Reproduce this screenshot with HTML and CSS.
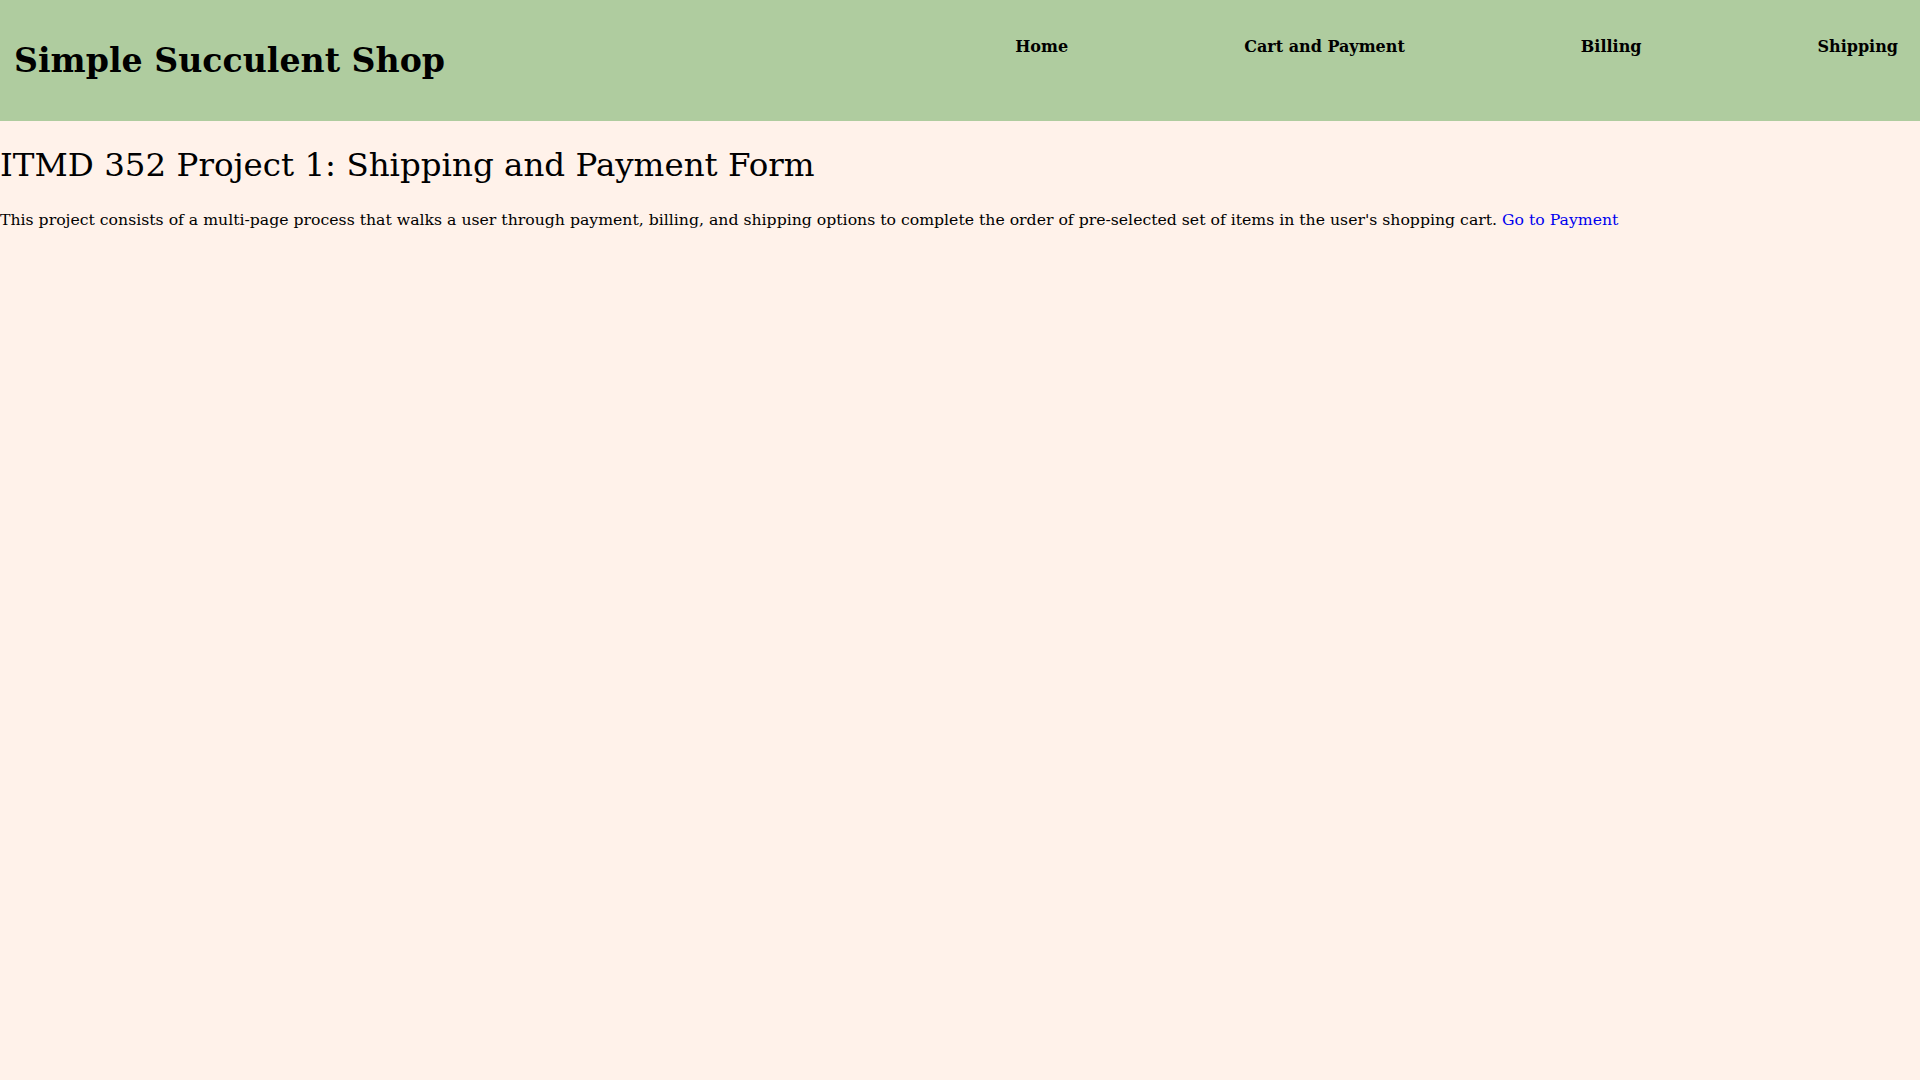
FILE: index.html
```html
<!DOCTYPE html>
<html lang="en">
<head>
<meta charset="utf-8">
<title>Simple Succulent Shop</title>
<link rel="stylesheet" href="styles.css">
</head>
<body>
<header class="site-header">
  <h1 class="brand">Simple Succulent Shop</h1>
  <nav class="main-nav">
    <ul class="nav-list">
      <li class="nav-item"><a class="nav-link" href="#">Home</a></li>
      <li class="nav-item"><a class="nav-link" href="#">Cart and Payment</a></li>
      <li class="nav-item"><a class="nav-link" href="#">Billing</a></li>
      <li class="nav-item"><a class="nav-link" href="#">Shipping</a></li>
    </ul>
  </nav>
</header>
<main class="content">
  <h2 class="page-title">ITMD 352 Project 1: Shipping and Payment Form</h2>
  <p class="intro">This project consists of a multi-page process that walks a user through payment, billing, and shipping options to complete the order of pre-selected set of items in the user's shopping cart. <a class="intro-link" href="#">Go to Payment</a></p>
</main>
</body>
</html>
```

FILE: styles.css
```css
html, body {
  margin: 0;
  padding: 0;
}

body {
  background: #fff2ea;
  color: #000;
  font-family: "DejaVu Serif", "Liberation Serif", serif;
  min-height: 100vh;
}

.site-header {
  display: flex;
  justify-content: space-between;
  align-items: flex-start;
  height: 121px;
  box-sizing: border-box;
  background: #afcc9f;
}

.brand {
  margin: 41px 0 0 14px;
  font-size: 33.2px;
  line-height: 40px;
  font-weight: bold;
}

.nav-list {
  display: flex;
  gap: 176px;
  list-style: none;
  margin: 37px 22px 0 0;
  padding: 0;
}

.nav-link {
  display: block;
  color: #000;
  text-decoration: none;
  font-weight: bold;
  font-size: 16px;
  line-height: 20px;
}

.content {
  padding: 0;
}

.page-title {
  margin: 24px 0 0 0;
  font-size: 32.5px;
  line-height: 40px;
  font-weight: normal;
}

.intro {
  margin: 24.5px 0 0 0;
  font-size: 15.7px;
  line-height: 20px;
}

.intro-link {
  color: #0000ee;
  text-decoration: none;
}
```
